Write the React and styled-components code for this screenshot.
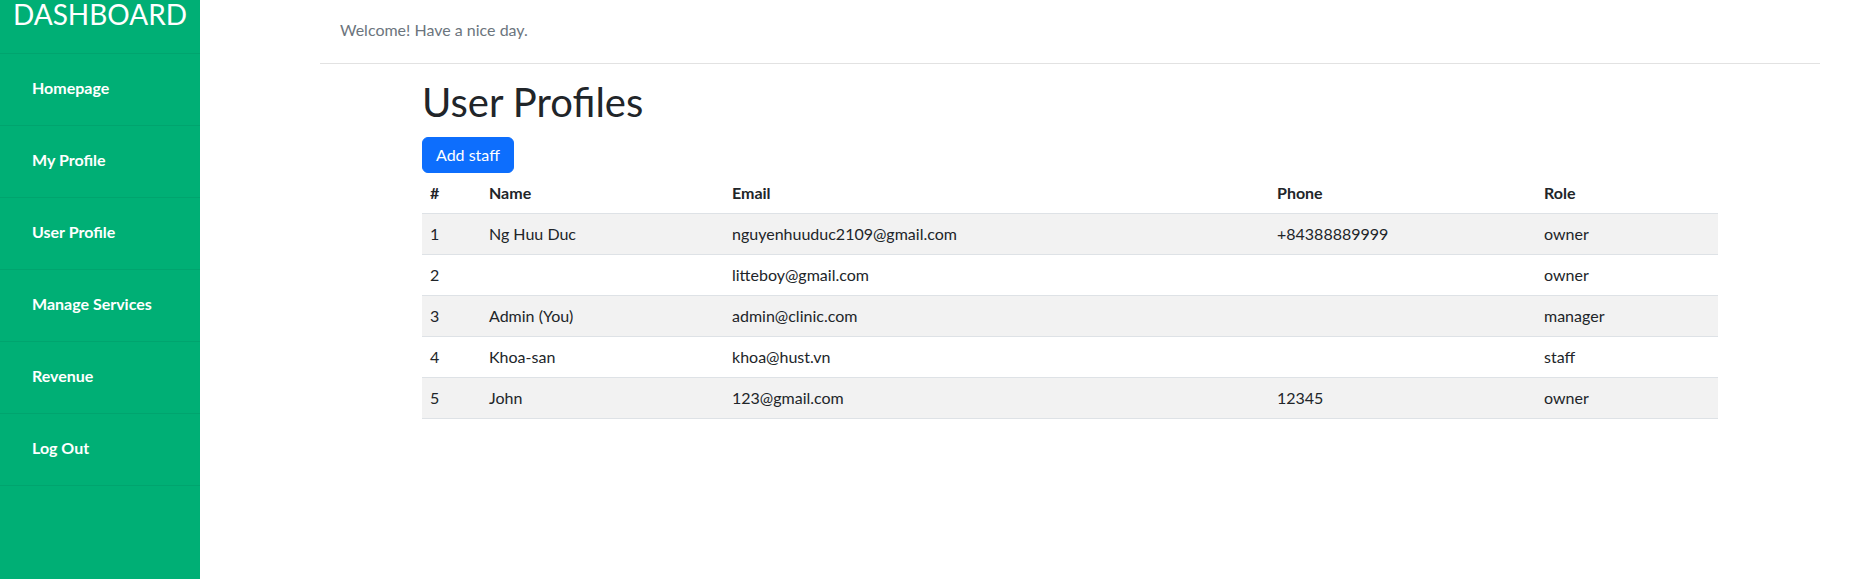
import React from 'react';
import styled, { createGlobalStyle } from 'styled-components';

const GlobalStyle = createGlobalStyle`
  * {
    box-sizing: border-box;
  }
  body {
    margin: 0;
    font-family: Lato, 'Open Sans', sans-serif;
    color: #212529;
    background-color: #fff;
  }
`;

const users = [
  { id: 1, name: 'Ng Huu Duc', email: 'nguyenhuuduc2109@gmail.com', phone: '+84388889999', role: 'owner' },
  { id: 2, name: '', email: 'litteboy@gmail.com', phone: '', role: 'owner' },
  { id: 3, name: 'Admin (You)', email: 'admin@clinic.com', phone: '', role: 'manager' },
  { id: 4, name: 'Khoa-san', email: 'khoa@hust.vn', phone: '', role: 'staff' },
  { id: 5, name: 'John', email: '123@gmail.com', phone: '12345', role: 'owner' },
];

const navLinks = ['Homepage', 'My Profile', 'User Profile', 'Manage Services', 'Revenue', 'Log Out'];

const columns = [
  { key: 'id', label: '#', width: 59 },
  { key: 'name', label: 'Name', width: 243 },
  { key: 'email', label: 'Email', width: 545 },
  { key: 'phone', label: 'Phone', width: 267 },
  { key: 'role', label: 'Role', width: 182 },
];

const Layout = styled.div`
  display: flex;
  flex-direction: row;
  min-height: 100vh;
`;

const Sidebar = styled.nav`
  width: 200px;
  flex-shrink: 0;
  background-color: #00af75;
  display: flex;
  flex-direction: column;
`;

const Brand = styled.div`
  height: 54px;
  font-size: 28px;
  line-height: 28px;
  color: #fff;
  text-align: center;
  border-bottom: 1px solid rgba(0, 0, 0, 0.06);
`;

const NavList = styled.ul`
  list-style: none;
  margin: 0;
  padding: 0;
`;

const NavItem = styled.li`
  height: 72px;
  padding: 0 0 5px 32px;
  display: flex;
  align-items: center;
  font-size: 16px;
  font-weight: 700;
  color: #fff;
  border-bottom: 1px solid rgba(0, 0, 0, 0.06);
  cursor: pointer;
`;

const Main = styled.main`
  flex: 1;
  padding: 0 44px 0 120px;
`;

const Header = styled.header`
  height: 64px;
  padding: 0 20px 4px;
  display: flex;
  align-items: center;
  font-size: 16px;
  color: #6c757d;
  border-bottom: 1px solid #e2e2e2;
`;

const Container = styled.div`
  max-width: 1320px;
  margin: 0 auto;
  padding: 14px 12px 0;
`;

const Title = styled.h1`
  margin: 0 0 11px;
  font-size: 40px;
  font-weight: 400;
  line-height: 1.2;
  color: #212529;
`;

const Button = styled.button`
  font-family: inherit;
  font-size: 16px;
  line-height: 24px;
  padding: 5px 13px;
  color: #fff;
  background-color: #0d6efd;
  border: 1px solid #0d6efd;
  border-radius: 6px;
  cursor: pointer;
`;

const Table = styled.table`
  width: 100%;
  border-collapse: collapse;
  table-layout: fixed;
  font-size: 16px;
  line-height: 24px;
`;

const Th = styled.th`
  width: ${(props) => props.$width}px;
  padding: 8px;
  text-align: left;
  font-weight: 700;
  border-bottom: 1px solid #dee2e6;
`;

const Row = styled.tr`
  background-color: ${(props) => (props.$striped ? '#f2f2f2' : '#fff')};
`;

const Td = styled.td`
  padding: 8px;
  border-bottom: 1px solid #dee2e6;
  white-space: nowrap;
`;

const App = () => {
  return (
    <>
      <GlobalStyle />
      <Layout>
        <Sidebar>
          <Brand>DASHBOARD</Brand>
          <NavList>
            {navLinks.map((link) => (
              <NavItem key={link}>{link}</NavItem>
            ))}
          </NavList>
        </Sidebar>
        <Main>
          <Header>Welcome! Have a nice day.</Header>
          <Container>
            <Title>User Profiles</Title>
            <Button>Add staff</Button>
            <Table>
              <thead>
                <tr>
                  {columns.map((col) => (
                    <Th key={col.key} $width={col.width}>
                      {col.label}
                    </Th>
                  ))}
                </tr>
              </thead>
              <tbody>
                {users.map((user, i) => (
                  <Row key={user.id} $striped={i % 2 === 0}>
                    {columns.map((col) => (
                      <Td key={col.key}>{user[col.key]}</Td>
                    ))}
                  </Row>
                ))}
              </tbody>
            </Table>
          </Container>
        </Main>
      </Layout>
    </>
  );
};

export default App;
